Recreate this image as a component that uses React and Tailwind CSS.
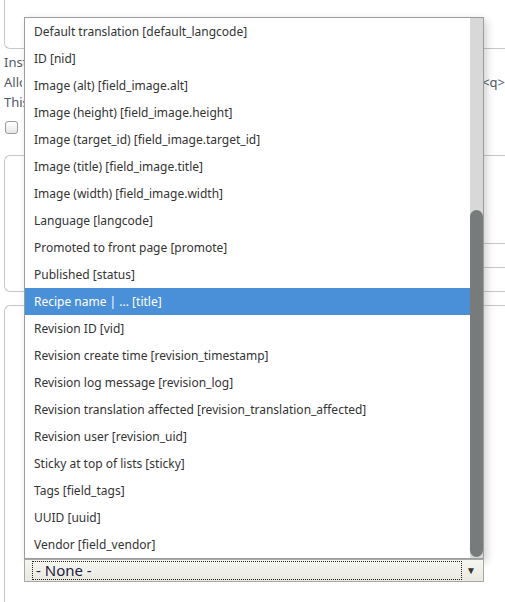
import React from "react";

const options = [
  "Default translation [default_langcode]",
  "ID [nid]",
  "Image (alt) [field_image.alt]",
  "Image (height) [field_image.height]",
  "Image (target_id) [field_image.target_id]",
  "Image (title) [field_image.title]",
  "Image (width) [field_image.width]",
  "Language [langcode]",
  "Promoted to front page [promote]",
  "Published [status]",
  "Recipe name | ... [title]",
  "Revision ID [vid]",
  "Revision create time [revision_timestamp]",
  "Revision log message [revision_log]",
  "Revision translation affected [revision_translation_affected]",
  "Revision user [revision_uid]",
  "Sticky at top of lists [sticky]",
  "Tags [field_tags]",
  "UUID [uuid]",
  "Vendor [field_vendor]",
];

const App = () => {
  return (
    <div
      className="relative w-[505px] h-[602px] overflow-hidden bg-white"
      style={{ fontFamily: '"Noto Sans", "Open Sans", sans-serif' }}
    >
      {/* Page behind the popup (mostly hidden by the list) */}
      <div className="pl-1">
        <div className="h-[50px] -mt-px border border-t-0 border-r-0 border-[#c8c8c8] rounded-bl-md bg-white" />

        <div className="pt-[3px] text-[13px] leading-[20px] text-[#4e5a68]">
          <p className="w-[20px] overflow-hidden whitespace-nowrap">Instructions</p>
          <div className="flex whitespace-nowrap">
            <span className="w-[20px] overflow-hidden">Allowed HTML tags</span>
            <span className="ml-[460px]">&lt;q&gt;</span>
          </div>
          <p className="w-[20px] overflow-hidden whitespace-nowrap">This field</p>
        </div>

        <div className="mt-[9px] ml-px w-[13px] h-[13px] rounded-[3px] border border-[#9a9a9a] bg-gradient-to-b from-white to-[#e6e6e6]" />

        <div className="mt-[21px] h-[137px] border border-r-0 border-[#c8c8c8] rounded-l-md bg-white">
          <div className="ml-[19px] mt-[14px] w-px h-[2px] bg-[#7a8aa0]" />
          <div className="mt-[71px] ml-[26px] h-[25px] border-y border-[#c8c8c8]" />
        </div>

        <div className="mt-[13px] h-[300px] border border-r-0 border-[#c8c8c8] rounded-tl-md bg-white">
          <div className="ml-[19px] mt-[16px] w-px h-[2px] bg-[#7a8aa0]" />
        </div>
      </div>

      {/* Open select list */}
      <div className="absolute left-[24px] top-[17px] w-[460px] h-[542px] flex border border-[#9c9c9c] bg-white shadow-[3px_3px_8px_rgba(0,0,0,0.18)]">
        <ul className="flex-1 text-[12px] text-[#333]">
          {options.map((opt, i) => (
            <li
              key={opt}
              className={`h-[27px] flex items-center pl-[9px] pt-px whitespace-nowrap ${
                i === 10 ? "bg-[#4a90d9] text-white" : ""
              }`}
            >
              {opt}
            </li>
          ))}
        </ul>
        <div className="w-[13px] bg-[#d8d8d8] flex flex-col">
          <div className="h-[192px]" />
          <div className="flex-1 mb-px rounded-full bg-[#777b7b]" />
        </div>
      </div>

      {/* Select control */}
      <div className="absolute left-[24px] top-[559px] w-[460px] h-[23px] flex items-center border border-[#a8a8a8] bg-gradient-to-b from-[#f6f6f1] to-[#e9e9e1]">
        <div className="ml-[7px] w-[430px] h-[19px] flex items-center border border-dotted border-[#222] pl-[3px] text-[15px] text-[#1c2240]">
          - None -
        </div>
        <span className="ml-[4px] text-[10px] text-[#333]">▼</span>
      </div>
    </div>
  );
};

export default App;
